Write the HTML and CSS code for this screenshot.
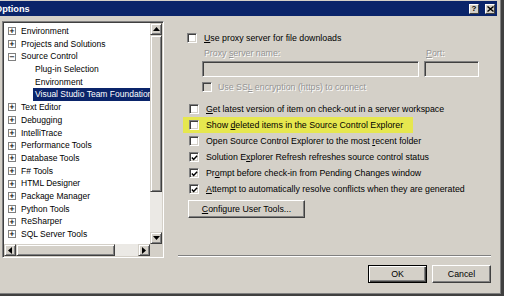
FILE: index.html
```html
<!DOCTYPE html>
<html>
<head>
<meta charset="utf-8">
<link rel="stylesheet" href="styles.css">
</head>
<body>
<div class="dialog">
  <div class="titlebar">
    <span class="title">Options</span>
    <div class="tbtns">
      <span class="tbtn">?</span>
      <span class="tbtn"><svg width="7" height="6" viewBox="0 0 7 6"><path d="M0.5 0.5 L6.5 5.5 M6.5 0.5 L0.5 5.5" stroke="#000" stroke-width="1.4"/></svg></span>
    </div>
  </div>
  <div class="main">
    <div class="tree-box">
      <div class="tree-list">
        <div class="node"><span class="exp">+</span><span class="lbl">Environment</span></div>
        <div class="node"><span class="exp">+</span><span class="lbl">Projects and Solutions</span></div>
        <div class="node"><span class="exp">−</span><span class="lbl">Source Control</span></div>
        <div class="node child"><span class="lbl">Plug-in Selection</span></div>
        <div class="node child"><span class="lbl">Environment</span></div>
        <div class="node child"><span class="lbl sel">Visual Studio Team Foundation Server</span></div>
        <div class="node"><span class="exp">+</span><span class="lbl">Text Editor</span></div>
        <div class="node"><span class="exp">+</span><span class="lbl">Debugging</span></div>
        <div class="node"><span class="exp">+</span><span class="lbl">IntelliTrace</span></div>
        <div class="node"><span class="exp">+</span><span class="lbl">Performance Tools</span></div>
        <div class="node"><span class="exp">+</span><span class="lbl">Database Tools</span></div>
        <div class="node"><span class="exp">+</span><span class="lbl">F# Tools</span></div>
        <div class="node"><span class="exp">+</span><span class="lbl">HTML Designer</span></div>
        <div class="node"><span class="exp">+</span><span class="lbl">Package Manager</span></div>
        <div class="node"><span class="exp">+</span><span class="lbl">Python Tools</span></div>
        <div class="node"><span class="exp">+</span><span class="lbl">ReSharper</span></div>
        <div class="node"><span class="exp">+</span><span class="lbl">SQL Server Tools</span></div>
      </div>
      <div class="vscroll">
        <span class="arrow"><svg width="7" height="4" viewBox="0 0 7 4"><path d="M0 4 L3.5 0 L7 4 Z" fill="#000"/></svg></span>
        <span class="vthumb"></span>
        <span class="track"></span>
        <span class="arrow"><svg width="7" height="4" viewBox="0 0 7 4"><path d="M0 0 L3.5 4 L7 0 Z" fill="#000"/></svg></span>
      </div>
      <div class="hscroll">
        <span class="arrow"><svg width="4" height="7" viewBox="0 0 4 7"><path d="M4 0 L0 3.5 L4 7 Z" fill="#000"/></svg></span>
        <span class="hthumb"></span>
        <span class="track"></span>
        <span class="arrow"><svg width="4" height="7" viewBox="0 0 4 7"><path d="M0 0 L4 3.5 L0 7 Z" fill="#000"/></svg></span>
      </div>
      <div class="corner"></div>
    </div>
    <div class="right">
      <div class="proxy">
        <div class="row"><span class="cb"></span><span><u>U</u>se proxy server for file downloads</span></div>
        <div class="proxy-grid">
          <span class="dis lab">Proxy <u>s</u>erver name:</span>
          <span class="dis lab"><u>P</u>ort:</span>
          <span class="field"></span>
          <span class="field"></span>
        </div>
        <div class="row ssl"><span class="cb cb-dis"></span><span class="dis">Use SS<u>L</u> encryption (https) to connect</span></div>
      </div>
      <div class="list">
        <div class="row"><span class="cb"></span><span><u>G</u>et latest version of item on check-out in a server workspace</span></div>
        <div class="row hl"><span class="cb"></span><span>Show <u>d</u>eleted items in the Source Control Explorer</span></div>
        <div class="row"><span class="cb"></span><span>Open Source Control Explorer to the most <u>r</u>ecent folder</span></div>
        <div class="row"><span class="cb on"><svg width="8" height="8" viewBox="0 0 8 8"><path d="M1 3.5 L3 5.6 L7 1.4" fill="none" stroke="#000" stroke-width="1.7"/></svg></span><span>Solution E<u>x</u>plorer Refresh refreshes source control status</span></div>
        <div class="row"><span class="cb on"><svg width="8" height="8" viewBox="0 0 8 8"><path d="M1 3.5 L3 5.6 L7 1.4" fill="none" stroke="#000" stroke-width="1.7"/></svg></span><span>Pr<u>o</u>mpt before check-in from Pending Changes window</span></div>
        <div class="row"><span class="cb on"><svg width="8" height="8" viewBox="0 0 8 8"><path d="M1 3.5 L3 5.6 L7 1.4" fill="none" stroke="#000" stroke-width="1.7"/></svg></span><span><u>A</u>ttempt to automatically resolve conflicts when they are generated</span></div>
        <button class="btn cfg"><u>C</u>onfigure User Tools...</button>
      </div>
      <div class="sep"></div>
      <div class="actions">
        <button class="btn def">OK</button>
        <button class="btn">Cancel</button>
      </div>
    </div>
  </div>
</div>
</body>
</html>
```

FILE: styles.css
```css
html, body {
  margin: 0;
  padding: 0;
  background: #fff;
  overflow: hidden;
}
body {
  font-family: "Liberation Sans", Arial, sans-serif;
  font-size: 8.8px;
  color: #000;
}
.dialog {
  box-sizing: border-box;
  width: 510px;
  height: 296px;
  margin-left: -6px;
  padding: 1px 10px 0 8px;
  background: #d4d0c8;
  border-right: 3px solid #404040;
  border-bottom: 2px solid #404040;
  box-shadow: inset -1px -1px 0 #808080;
}
.titlebar {
  height: 15px;
  margin: 0 -6px 0 -8px;
  padding-left: 1px;
  background: #0a246a;
  display: flex;
  align-items: center;
  justify-content: space-between;
}
.title {
  color: #fff;
  font-weight: bold;
  font-size: 9.2px;
}
.tbtns {
  display: flex;
  gap: 6px;
  padding-right: 2px;
}
.tbtn {
  box-sizing: border-box;
  width: 10px;
  height: 10px;
  background: #d4d0c8;
  border: 1px solid;
  border-color: #fff #404040 #404040 #fff;
  display: flex;
  align-items: center;
  justify-content: center;
  font-weight: bold;
  font-size: 8px;
  line-height: 1;
}
.main {
  display: flex;
  padding-top: 5px;
}
.tree-box {
  box-sizing: border-box;
  width: 162px;
  height: 237px;
  flex: none;
  border: 1px solid;
  border-color: #808080 #fff #fff #808080;
  box-shadow: inset 1px 1px 0 #404040, inset -1px -1px 0 #d4d0c8;
  padding: 1px;
  display: grid;
  grid-template-columns: 1fr 12px;
  grid-template-rows: 1fr 12px;
  font-size: 8.5px;
}
.tree-list {
  background: #fff;
  overflow: hidden;
  padding-top: 2px;
}
.node {
  height: 12.7px;
  display: flex;
  align-items: center;
  white-space: nowrap;
  padding-left: 4px;
}
.exp {
  box-sizing: border-box;
  width: 8px;
  height: 8px;
  border: 1px solid #808080;
  font-size: 7px;
  line-height: 6px;
  text-align: center;
  margin-right: 5px;
  flex: none;
  font-family: "DejaVu Sans", sans-serif;
  font-weight: bold;
}
.child {
  padding-left: 29px;
}
.lbl {
  line-height: 12.7px;
}
.child .lbl {
  padding: 0 2px;
}
.sel {
  background: #0a246a;
  color: #fff;
}
.vscroll {
  display: flex;
  flex-direction: column;
  background: #ebe9e5;
}
.hscroll {
  display: flex;
  background: #ebe9e5;
}
.arrow {
  box-sizing: border-box;
  width: 12px;
  height: 12px;
  flex: none;
  background: #d4d0c8;
  border: 1px solid;
  border-color: #d4d0c8 #404040 #404040 #d4d0c8;
  box-shadow: inset 1px 1px 0 #fff, inset -1px -1px 0 #808080;
  display: flex;
  align-items: center;
  justify-content: center;
}
.vthumb, .hthumb {
  box-sizing: border-box;
  background: #d4d0c8;
  border: 1px solid;
  border-color: #d4d0c8 #404040 #404040 #d4d0c8;
  box-shadow: inset 1px 1px 0 #fff, inset -1px -1px 0 #808080;
  flex: none;
}
.vthumb {
  height: 157px;
}
.hthumb {
  width: 99px;
}
.track {
  flex: 1;
}
.corner {
  background: #d4d0c8;
}
.right {
  flex: 1;
  margin-left: 14px;
  display: flex;
  flex-direction: column;
}
.row {
  height: 16px;
  display: flex;
  align-items: center;
  white-space: nowrap;
}
.cb {
  box-sizing: border-box;
  width: 10px;
  height: 10px;
  flex: none;
  background: #fff;
  border: 1px solid;
  border-color: #808080 #fff #fff #808080;
  box-shadow: inset 1px 1px 0 #404040, inset -1px -1px 0 #d4d0c8;
  margin-right: 7px;
  display: flex;
  align-items: center;
  justify-content: center;
}
.cb svg {
  margin: 1px 0 0 1px;
}
.cb-dis {
  background: #d4d0c8;
}
.proxy {
  margin-top: 9px;
  padding-left: 9px;
}
.proxy-grid {
  display: grid;
  grid-template-columns: 217px 55px;
  column-gap: 5px;
  margin-left: 15px;
}
.lab {
  line-height: 14px;
  padding-left: 2px;
  margin-bottom: 1px;
}
.dis {
  color: #959595;
  text-shadow: 1px 1px 0 #fff;
}
.field {
  box-sizing: border-box;
  height: 16px;
  border: 1px solid;
  border-color: #808080 #fff #fff #808080;
  box-shadow: inset 1px 1px 0 #404040, inset -1px -1px 0 #d4d0c8;
  background: #d4d0c8;
}
.ssl {
  margin: 2px 0 0 15px;
}
.ssl .cb {
  margin-right: 6px;
}
.list {
  margin-top: 6px;
  padding-left: 11px;
  display: flex;
  flex-direction: column;
  align-items: flex-start;
}
.hl {
  box-sizing: border-box;
  width: 230px;
  margin-left: -6px;
  padding-left: 6px;
  background: #e6e74f;
}
.btn {
  box-sizing: border-box;
  height: 18px;
  padding: 0;
  font: inherit;
  color: #000;
  background: #d4d0c8;
  border: 1px solid;
  border-color: #fff #404040 #404040 #fff;
  box-shadow: inset -1px -1px 0 #808080;
}
.cfg {
  width: 117px;
  margin: 3px 0 0 -1px;
}
.sep {
  margin-top: 37px;
  height: 0;
  border-top: 1px solid #808080;
  border-bottom: 1px solid #fff;
}
.actions {
  display: flex;
  justify-content: flex-end;
  gap: 5px;
  margin-top: 8px;
}
.actions .btn {
  width: 59px;
}
.def {
  border: 1px solid #000;
  box-shadow: inset 1px 1px 0 #fff, inset -1px -1px 0 #404040, inset -2px -2px 0 #808080;
}
```
